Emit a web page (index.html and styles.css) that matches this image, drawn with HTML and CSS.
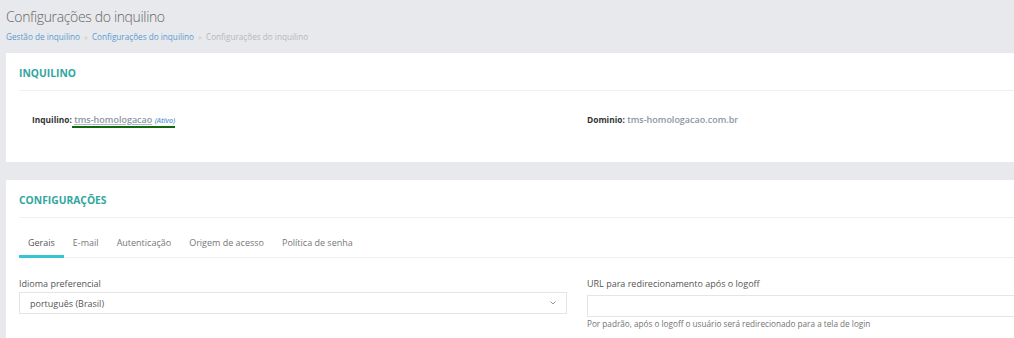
FILE: index.html
```
<!DOCTYPE html>
<html lang="pt-BR">
<head>
    <meta charset="UTF-8">
    <meta name="viewport" content="width=device-width, initial-scale=1.0">
    <title>Configurações do inquilino</title>
    <link rel="stylesheet" href="styles.css">
</head>
<body>
    <div class="page">
        <h1 class="page-title">Configurações do inquilino</h1>
        <ul class="breadcrumb">
            <li><a href="#">Gestão de inquilino</a></li>
            <li class="sep">&raquo;</li>
            <li><a href="#">Configurações do inquilino</a></li>
            <li class="sep">&raquo;</li>
            <li class="current">Configurações do inquilino</li>
        </ul>

        <div class="card">
            <div class="card-title">INQUILINO</div>
            <div class="card-body">
                <div class="row info-row">
                    <div class="info first">
                        <b>Inquilino:</b><a href="#" class="tenant"> <u>tms-homologacao</u> <i class="status">(Ativo)</i></a>
                    </div>
                    <div class="info">
                        <b>Dominio:</b> <span class="value">tms-homologacao.com.br</span>
                    </div>
                </div>
            </div>
        </div>

        <div class="card card-settings">
            <div class="card-title">CONFIGURAÇÕES</div>
            <ul class="tabs">
                <li class="active">Gerais</li>
                <li>E-mail</li>
                <li>Autenticação</li>
                <li>Origem de acesso</li>
                <li>Política de senha</li>
            </ul>
            <div class="row">
                <div class="field">
                    <label for="idioma">Idioma preferencial</label>
                    <div class="select">
                        <span>português (Brasil)</span>
                        <svg width="6" height="4" viewBox="0 0 6 4"><path d="M0.5 0.5 L3 3 L5.5 0.5" fill="none" stroke="#8a9aab" stroke-width="1"/></svg>
                    </div>
                </div>
                <div class="field">
                    <label for="url">URL para redirecionamento após o logoff</label>
                    <input type="text" id="url">
                    <div class="help">Por padrão, após o logoff o usuário será redirecionado para a tela de login</div>
                </div>
            </div>
        </div>
    </div>
</body>
</html>
```

FILE: styles.css
```
html, body {
    margin: 0;
    overflow: hidden;
}
body {
    font-family: "Open Sans", "Noto Sans", sans-serif;
    background-color: #e8e9ec;
    color: #555;
}
.page {
    width: 1160px;
    padding: 0 0 0 6px;
}
.page-title {
    margin: 0;
    padding-top: 6px;
    font-size: 14px;
    letter-spacing: -0.35px;
    font-weight: 300;
    color: #666;
    line-height: 22px;
}
.breadcrumb {
    list-style: none;
    margin: 0;
    padding: 2px 0 0;
    display: flex;
    gap: 4px;
    font-size: 8.2px;
    line-height: 14px;
}
.breadcrumb a {
    color: #5b9bd1;
    text-decoration: none;
}
.breadcrumb .sep {
    color: #c5c8cc;
    font-size: 8px;
}
.breadcrumb .current {
    color: #b5b8bc;
}
.card {
    background: #fff;
    padding: 0 13px;
    margin-top: 9px;
}
.card + .card {
    margin-top: 18px;
}
.card-settings {
    padding-bottom: 30px;
}
.card-title {
    color: #32a6a0;
    font-weight: 700;
    font-size: 10.3px;
    line-height: 14px;
    padding: 13px 0 10px;
    border-bottom: 1px solid #eef0f2;
}
.card-body {
    padding: 22px 0 34px;
}
.row {
    display: grid;
    grid-template-columns: 548px 548px;
    gap: 20px;
}
.info {
    font-size: 9px;
    line-height: 14px;
    color: #8a97a5;
    font-weight: 600;
}
.info b {
    color: #333;
    font-weight: 700;
    font-size: 8.4px;
}
.info.first {
    padding-left: 13px;
}
.tenant {
    color: #8a97a5;
    text-decoration: none;
    border-bottom: 2px solid #0d6b0d;
}
.tenant u {
    text-decoration-color: #b0b8c0;
}
.status {
    color: #5b9bd1;
    font-size: 7px;
    font-weight: 600;
}
.value {
    color: #8a97a5;
}
.tabs {
    list-style: none;
    margin: 0;
    padding: 0;
    display: flex;
    border-bottom: 1px solid #eef0f2;
    font-size: 9px;
}
.tabs li {
    padding: 18px 9px 5px;
    color: #777;
    border-bottom: 3px solid transparent;
    margin-bottom: -1px;
    line-height: 14px;
}
.tabs li.active {
    border-bottom-color: #36c6d3;
    color: #555;
}
.tabs + .row {
    padding-top: 19px;
}
label {
    display: block;
    font-size: 9px;
    line-height: 14px;
    color: #555;
    margin-bottom: 1px;
}
.select, input {
    box-sizing: border-box;
    height: 22px;
    width: 100%;
    border: 1px solid #e5e5e5;
    font-family: inherit;
    font-size: 9px;
    color: #555;
}
.select {
    display: flex;
    align-items: center;
    justify-content: space-between;
    padding: 0 10px 0 10px;
}
input {
    padding: 0 10px;
    outline: none;
}
.help {
    font-size: 8.2px;
    color: #737373;
    line-height: 14px;
    margin-top: 0;
}
```
